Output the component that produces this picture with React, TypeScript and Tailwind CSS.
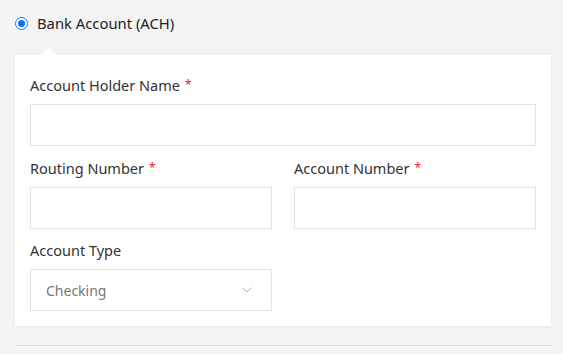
function Label({ text, required }: { text: string; required?: boolean }) {
  return (
    <label className="block h-5 leading-5 text-[14.5px] text-[#333] mb-[9px]">
      {text}
      {required && <span className="text-[#f0202a] text-[12px] ml-[5px] align-top">*</span>}
    </label>
  );
}

function TextInput() {
  return <input type="text" className="block w-full h-[42px] border border-[#e2e2e2] bg-white outline-none px-4" />;
}

export default function App() {
  return (
    <div className="w-[563px] h-[354px] bg-[#f4f4f4] font-['Noto_Sans',sans-serif] overflow-hidden">
      <div className="px-[15px] pt-[15px]">
        <label className="flex items-center h-4">
          <span className="w-[13px] h-[13px] rounded-full border border-[#1a73e8] bg-white flex items-center justify-center">
            <span className="w-[7px] h-[7px] rounded-full bg-[#1a6ff0]" />
          </span>
          <span className="ml-[9px] text-[14.8px] text-[#222] leading-5">Bank Account (ACH)</span>
        </label>

        <div className="relative mt-[24px] bg-white shadow-[0_1px_3px_rgba(0,0,0,0.06)] w-[536px] pt-[20px] px-[15px] pb-[15px]">
          <div className="absolute -top-[7px] left-[27px] w-0 h-0 border-l-[7px] border-r-[7px] border-b-[7px] border-l-transparent border-r-transparent border-b-white" />
          <Label text="Account Holder Name" required />
          <TextInput />

          <div className="grid grid-cols-2 gap-x-[22px] mt-[12px]">
            <div>
              <Label text="Routing Number" required />
              <TextInput />
            </div>
            <div>
              <Label text="Account Number" required />
              <TextInput />
            </div>
          </div>

          <div className="grid grid-cols-2 gap-x-[22px] mt-[11px]">
            <div>
              <Label text="Account Type" />
              <div className="flex items-center justify-between h-[42px] border border-[#e2e2e2] pl-[15px] pr-[19px]">
                <span className="text-[14px] text-[#777]">Checking</span>
                <svg width="10" height="6" viewBox="0 0 10 6" fill="none">
                  <path d="M0.5 0.5 L5 5 L9.5 0.5" stroke="#b5b5b5" strokeWidth="1" />
                </svg>
              </div>
            </div>
          </div>
        </div>

        <div className="mt-[19px] w-[536px] h-px bg-[#d9d9d9]" />
      </div>
    </div>
  );
}
